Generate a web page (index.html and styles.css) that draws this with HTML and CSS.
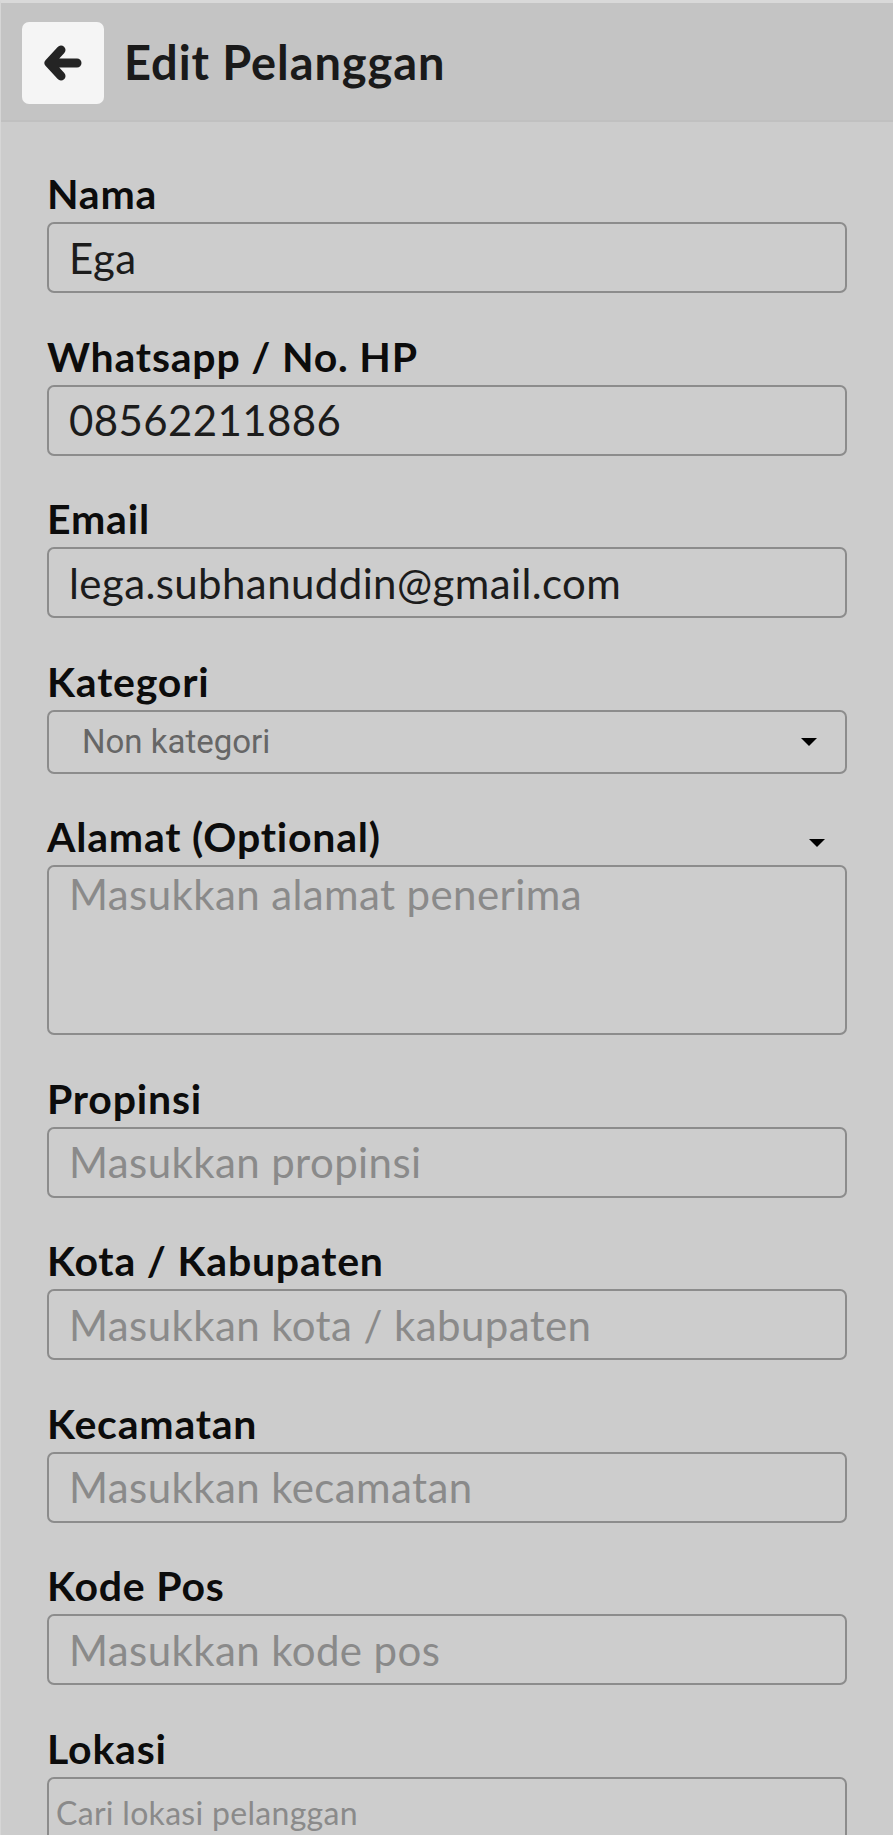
FILE: index.html
```html
<!DOCTYPE html>
<html lang="id">

<head>
    <meta charset="UTF-8">
    <meta name="viewport" content="width=device-width, initial-scale=1.0">
    <title>Edit Pelanggan</title>
    <link rel="stylesheet" href="styles.css">
</head>

<body>
    <div class="topbar">
        <a href="javascript:;" class="back">
            <svg viewBox="0 0 40 40" width="40" height="40">
                <path d="M18 7 L6 20 L18 33 M8 20 H34" fill="none" stroke="#242424" stroke-width="9" stroke-linecap="round" stroke-linejoin="round" />
            </svg>
        </a>
        <h1>Edit Pelanggan</h1>
    </div>

    <form class="form">
        <div class="field">
            <label>Nama</label>
            <input type="text" value="Ega">
        </div>
        <div class="field">
            <label>Whatsapp / No. HP</label>
            <input type="text" value="08562211886">
        </div>
        <div class="field">
            <label>Email</label>
            <input type="text" value="lega.subhanuddin@gmail.com">
        </div>
        <div class="field">
            <label>Kategori</label>
            <div class="select">
                <span>Non kategori</span>
                <i class="caret"></i>
            </div>
        </div>
        <div class="field">
            <div class="label-row">
                <label>Alamat (Optional)</label>
                <i class="caret"></i>
            </div>
            <textarea placeholder="Masukkan alamat penerima"></textarea>
        </div>
        <div class="field">
            <label>Propinsi</label>
            <input type="text" placeholder="Masukkan propinsi">
        </div>
        <div class="field">
            <label>Kota / Kabupaten</label>
            <input type="text" placeholder="Masukkan kota / kabupaten">
        </div>
        <div class="field">
            <label>Kecamatan</label>
            <input type="text" placeholder="Masukkan kecamatan">
        </div>
        <div class="field">
            <label>Kode Pos</label>
            <input type="text" placeholder="Masukkan kode pos">
        </div>
        <div class="field">
            <label>Lokasi</label>
            <input type="text" class="search" placeholder="Cari lokasi pelanggan">
        </div>
    </form>
</body>

</html>
```

FILE: styles.css
```css
* {
    margin: 0;
    padding: 0;
    box-sizing: border-box;
}

body {
    background-color: #cccccc;
    font-family: Lato, "Open Sans", sans-serif;
    color: #111;
    border-left: 1px solid #d6d6d6;
    border-top: 3px solid #d9d9d9;
}

.topbar {
    height: 119px;
    background-color: #c4c4c4;
    border-bottom: 2px solid #c0c0c0;
    display: flex;
    align-items: center;
    padding-left: 21px;
    gap: 20px;
}

.topbar .back {
    width: 82px;
    height: 82px;
    background-color: #f5f5f5;
    border-radius: 7px;
    display: flex;
    align-items: center;
    justify-content: center;
    margin-top: 3px;
}

.topbar h1 {
    font-size: 47px;
    font-weight: 700;
    color: #1a1a1a;
    letter-spacing: 0.9px;
}

.form {
    padding: 48px 46px 0 46px;
}

.field {
    display: flex;
    flex-direction: column;
    margin-bottom: 39.5px;
}

.field label {
    font-size: 41px;
    line-height: 48px;
    font-weight: 700;
    color: #0c0c0c;
    letter-spacing: 0.8px;
    margin-bottom: 4px;
}

.label-row {
    display: flex;
    justify-content: space-between;
    align-items: center;
}

.label-row .caret {
    margin-right: 22px;
    margin-top: 8px;
}

.field input,
.field textarea,
.select {
    width: 100%;
    height: 71px;
    border: 2px solid #8c8c8c;
    border-radius: 7px;
    background-color: #cdcdcd;
    font-family: Lato, "Open Sans", sans-serif;
    font-size: 42px;
    letter-spacing: 0.4px;
    color: #1c1c1c;
    padding: 0 20px;
    outline: none;
}

.field input::placeholder,
.field textarea::placeholder {
    color: #8a8a8a;
}

.field textarea {
    height: 170px;
    resize: none;
    padding-top: 3px;
    line-height: 48px;
}

.select {
    height: 64px;
    display: flex;
    align-items: center;
    justify-content: space-between;
    padding: 0 28px 0 33px;
    font-family: Roboto, sans-serif;
    font-size: 33px;
    letter-spacing: 0;
    color: #666;
}

.caret {
    width: 0;
    height: 0;
    border-left: 8px solid transparent;
    border-right: 8px solid transparent;
    border-top: 8px solid #000;
}

.field input.search {
    font-size: 32px;
    letter-spacing: 0.3px;
    padding-left: 7px;
    padding-top: 0;
}
```
